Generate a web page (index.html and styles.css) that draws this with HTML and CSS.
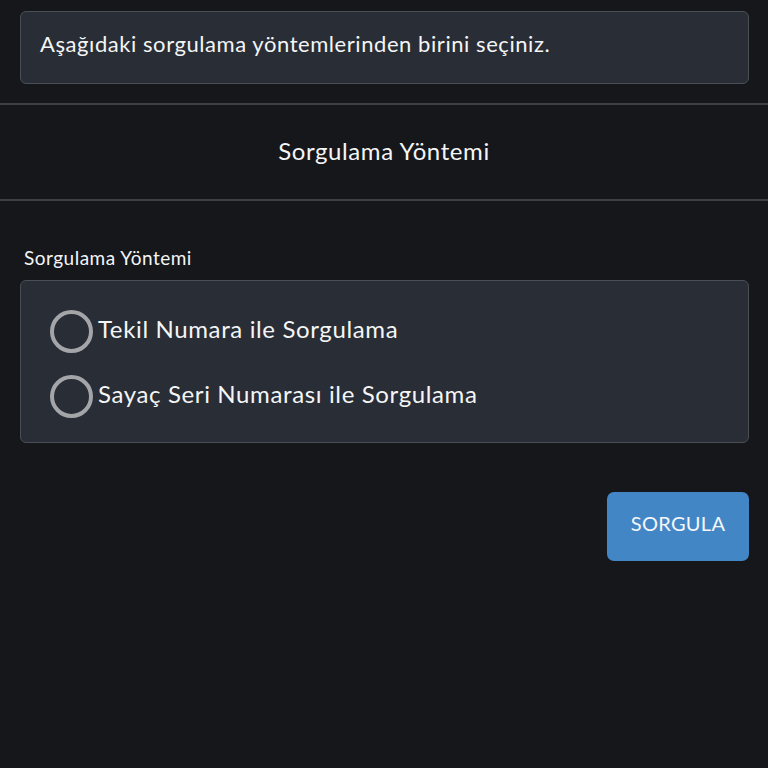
FILE: index.html
```html
<!DOCTYPE html>
<html lang="tr">
<head>
  <meta charset="UTF-8" />
  <meta name="viewport" content="width=device-width, initial-scale=1.0" />
  <title>Sorgulama Yöntemi</title>
  <link rel="stylesheet" href="styles.css">
</head>
<body>
  <div class="info-box">Aşağıdaki sorgulama yöntemlerinden birini seçiniz.</div>
  <h2 class="section-title">Sorgulama Yöntemi</h2>
  <form class="query-form">
    <p class="field-label">Sorgulama Yöntemi</p>
    <div class="options">
      <label class="option"><span class="radio"></span><span class="option-text">Tekil Numara ile Sorgulama</span></label>
      <label class="option"><span class="radio"></span><span class="option-text">Sayaç Seri Numarası ile Sorgulama</span></label>
    </div>
    <div class="actions">
      <button type="button" class="submit">SORGULA</button>
    </div>
  </form>
</body>
</html>
```

FILE: styles.css
```css
body {
  font-family: Lato, "Open Sans", sans-serif;
  background-color: #15171b;
  color: #f4f5f6;
  margin: 0;
  padding: 11px 19px 0 20px;
  height: 757px;
  overflow: hidden;
}
.info-box {
  box-sizing: border-box;
  height: 73px;
  display: flex;
  align-items: center;
  padding: 0 20px 8px 19px;
  background: #292d35;
  border: 1px solid #4a4e55;
  border-radius: 6px;
  font-size: 22px;
  letter-spacing: 0.56px;
}
.section-title {
  box-sizing: border-box;
  height: 98px;
  margin: 19px -19px 0 -20px;
  padding-bottom: 3px;
  display: flex;
  align-items: center;
  justify-content: center;
  border-top: 2px solid #3d4045;
  border-bottom: 2px solid #3d4045;
  font-size: 24px;
  font-weight: normal;
  letter-spacing: 0.6px;
}
.query-form {
  margin-top: 45px;
}
.field-label {
  margin: 0 0 9px 4px;
  height: 25px;
  line-height: 23px;
  font-size: 19px;
  letter-spacing: 0.5px;
}
.options {
  box-sizing: border-box;
  height: 163px;
  padding: 29px 29px;
  display: flex;
  flex-direction: column;
  gap: 23px;
  background: #292d35;
  border: 1px solid #4a4e55;
  border-radius: 6px;
}
.option {
  display: flex;
  align-items: center;
  gap: 5px;
  height: 42px;
  font-size: 24px;
  letter-spacing: 0.63px;
}
.option-text {
  margin-bottom: 5px;
}
.radio {
  box-sizing: border-box;
  width: 43px;
  height: 43px;
  flex-shrink: 0;
  border: 4px solid #a3a5a9;
  border-radius: 50%;
}
.actions {
  display: flex;
  justify-content: flex-end;
  margin-top: 49px;
}
.submit {
  width: 142px;
  height: 69px;
  padding: 0 0 8px;
  background-color: #4386c6;
  color: #f4f7fa;
  border: none;
  border-radius: 7px;
  font-family: inherit;
  font-size: 20px;
  letter-spacing: 0.3px;
}
```
